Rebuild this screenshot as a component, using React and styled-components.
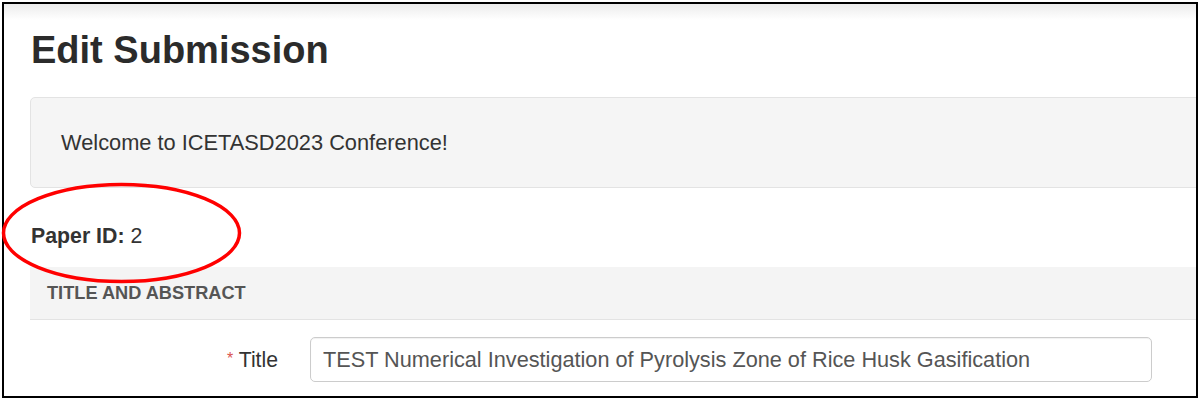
import React from 'react'
import styled, { createGlobalStyle } from 'styled-components'

const GlobalStyle = createGlobalStyle`
	html, body {
		margin: 0;
		padding: 0;
		background: #ffffff;
	}
	body {
		font-family: 'Liberation Sans', Arial, sans-serif;
		color: #333333;
	}
`

const App = () => {
	return (
		<Page>
			<GlobalStyle />
			<Frame>
				<Content>
					<Heading>Edit Submission</Heading>

					<Well>Welcome to ICETASD2023 Conference!</Well>

					<PaperId>
						<strong>Paper ID:</strong> 2
					</PaperId>

					<PanelHeading>Title and Abstract</PanelHeading>

					<FormRow>
						<Label>
							<Required>*</Required> Title
						</Label>
						<Input
							type="text"
							defaultValue="TEST Numerical Investigation of Pyrolysis Zone of Rice Husk Gasification"
						/>
					</FormRow>
				</Content>
			</Frame>

			<Circle width="260" height="300" viewBox="0 0 260 300">
				<ellipse cx="121.5" cy="233" rx="118" ry="48.5" fill="none" stroke="#ff0000" strokeWidth="3.5" />
			</Circle>
		</Page>
	)
}

const Page = styled.div`
	position: relative;
	width: 1200px;
	height: 400px;
	padding: 2px;
	box-sizing: border-box;
`

const Frame = styled.div`
	height: 396px;
	border: 2px solid #000000;
	box-sizing: border-box;
	overflow: hidden;
	background: linear-gradient(#ececec, #ffffff 16px);
`

const Content = styled.div`
	padding: 24px 0 0 26px;
`

const Heading = styled.h1`
	margin: 0 0 25px 1px;
	font-size: 38px;
	line-height: 44px;
	font-weight: 700;
	color: #2b2b2b;
`

const Well = styled.div`
	width: 1200px;
	padding: 30px 30px 29px;
	background: #f5f5f5;
	border: 1px solid #e3e3e3;
	border-radius: 5px;
	font-size: 21.8px;
	line-height: 30px;
	color: #333333;
`

const PaperId = styled.div`
	margin: 33px 0 16px 1px;
	font-size: 21.3px;
	line-height: 30px;
	color: #333333;

	strong {
		font-weight: 700;
	}
`

const PanelHeading = styled.div`
	padding: 13px 17px;
	background: #f4f4f4;
	border-bottom: 1px solid #e3e3e3;
	font-size: 18.2px;
	line-height: 26px;
	font-weight: 700;
	text-transform: uppercase;
	color: #555555;
`

const FormRow = styled.div`
	display: grid;
	grid-template-columns: 248px 842px;
	column-gap: 32px;
	align-items: center;
	margin-top: 17px;
`

const Label = styled.label`
	text-align: right;
	font-size: 21.2px;
	line-height: 30px;
	color: #333333;
`

const Required = styled.span`
	color: #d9534f;
	font-size: 16px;
	vertical-align: 3px;
`

const Input = styled.input`
	height: 45px;
	padding: 0 12px;
	border: 1px solid #cccccc;
	border-radius: 5px;
	box-sizing: border-box;
	font-family: 'Liberation Sans', Arial, sans-serif;
	font-size: 21.7px;
	color: #555555;
	background: #ffffff;
	box-shadow: inset 0 1px 1px rgba(0, 0, 0, 0.06);
`

const Circle = styled.svg`
	position: absolute;
	left: 0;
	top: 0;
	pointer-events: none;
`

export default App
